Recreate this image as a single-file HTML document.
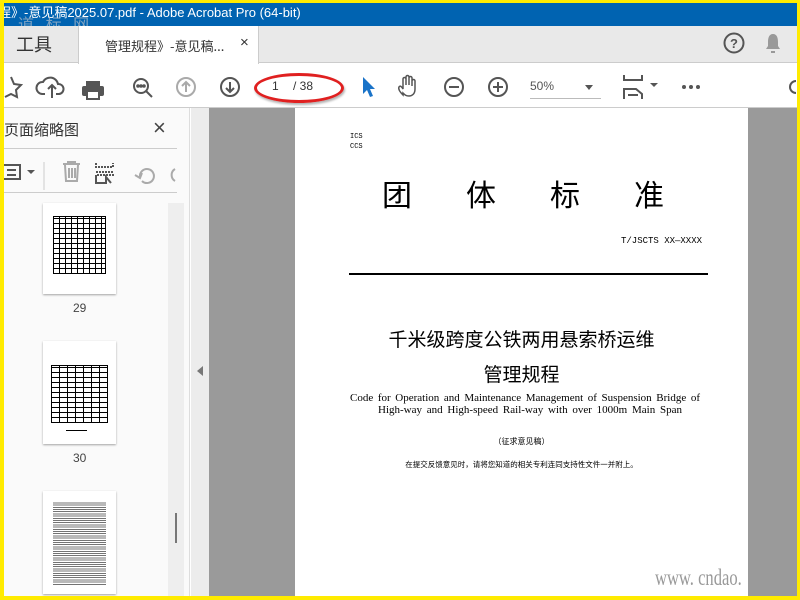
<!DOCTYPE html>
<html><head><meta charset="utf-8"><style>
*{margin:0;padding:0;box-sizing:border-box}
body{width:800px;height:600px;overflow:hidden;background:#ffeb00;position:relative;font-family:"Liberation Sans","Noto Sans CJK SC",sans-serif}
.a{position:absolute}
.cjk{font-family:"Noto Sans CJK SC",sans-serif}
</style></head><body>
<div class="a" style="left:4px;top:3px;width:793px;height:593px;background:#fff;overflow:hidden">
 <!-- title bar -->
 <div class="a" style="top:0;width:799px;height:23px;background:#0063b1;color:#fff;font-size:13px;line-height:19px;white-space:nowrap;left:-6px">程》-意见稿2025.07.pdf - Adobe Acrobat Pro (64-bit)</div>
 <div class="a cjk" style="left:14px;top:12px;color:rgba(180,190,200,.7);font-size:16px;letter-spacing:4px;line-height:16px">道 标 网</div>
 <!-- tab bar -->
 <div class="a" style="left:0;top:23px;width:793px;height:37px;background:#e9e9e9;border-bottom:1px solid #ccc"></div>
 <div class="a cjk" style="left:12px;top:28px;font-size:18px;color:#333">工具</div>
 <div class="a" style="left:74px;top:23px;width:181px;height:38px;background:#fff;border-left:1px solid #ccc;border-right:1px solid #ccc"></div>
 <div class="a cjk" style="left:101px;top:33px;font-size:13px;color:#333;white-space:nowrap">管理规程》-意见稿...</div>
 <div class="a" style="left:236px;top:31px;font-size:15px;color:#333">×</div>
 <svg class="a" style="left:719px;top:29px" width="22" height="22"><circle cx="11" cy="11" r="9.5" fill="none" stroke="#555" stroke-width="2"/><text x="11" y="16" font-size="13" font-weight="bold" text-anchor="middle" fill="#555" font-family="Liberation Sans">?</text></svg>
 <svg class="a" style="left:760px;top:29px" width="18" height="22"><path d="M9 2c4 0 5 4 5 8v4l2 3H2l2-3v-4c0-4 1-8 5-8zM7 19h4v2H7z" fill="#999"/></svg>
 <!-- toolbar -->
 <div class="a" style="left:0;top:104px;width:793px;height:1px;background:#ccc"></div>
 <svg class="a" style="left:0;top:62px" width="700" height="42" fill="none" stroke="#555" stroke-width="2">
  <path d="M7 12l3 7 7 1-5 5 1 7-6-3-6 3" />
  <path d="M41 29h-3a6 6 0 0 1 1-12 8 8 0 0 1 15 2 5 5 0 0 1 1 10h-3M48 33V20M44 24l4-4 4 4"/>
  <rect x="82" y="16" width="14" height="5" fill="#555" stroke="none"/><rect x="78" y="21" width="22" height="10" rx="2" fill="#555" stroke="none"/><rect x="83" y="26" width="12" height="8" fill="#fff" stroke="#555"/>
  <circle cx="137" cy="21" r="7"/><path d="M142 26l6 6"/><circle cx="134" cy="21" r=".8" fill="#555"/><circle cx="137" cy="21" r=".8" fill="#555"/><circle cx="140" cy="21" r=".8" fill="#555"/>
  <circle cx="182" cy="22" r="9" stroke="#aaa"/><path d="M182 27v-10M178 21l4-4 4 4" stroke="#aaa"/>
  <circle cx="226" cy="22" r="9"/><path d="M226 17v10M222 23l4 4 4-4"/>
  <path d="M359 12v17l4-4 3 7 3-1-3-7h5z" fill="#1a73c8" stroke="none"/>
  <path d="M399 30c-3-3-5-6-4-8s3 0 4 2V14a1.5 1.5 0 0 1 3 0v6-8a1.5 1.5 0 0 1 3 0v8-7a1.5 1.5 0 0 1 3 0v8-5a1.5 1.5 0 0 1 3 0v8c0 5-3 7-6 7s-4-1-6-3z" stroke-width="1.5"/>
  <circle cx="450" cy="22" r="9"/><path d="M445 22h10"/>
  <circle cx="494" cy="22" r="9"/><path d="M489 22h10M494 17v10"/>
  <path d="M620 10v5h18v-5M620 34v-10h12l6 5v5M624 30h10" stroke-width="2"/>
  <circle cx="680" cy="22" r="2" fill="#555" stroke="none"/><circle cx="687" cy="22" r="2" fill="#555" stroke="none"/><circle cx="694" cy="22" r="2" fill="#555" stroke="none"/>
 </svg>
 <div class="a" style="left:646px;top:80px;border-left:4px solid transparent;border-right:4px solid transparent;border-top:4px solid #555"></div>
 <svg class="a" style="left:783px;top:74px" width="12" height="20"><path d="M9 4a6 6 0 0 0 0 12" fill="none" stroke="#555" stroke-width="2"/></svg>
 <div class="a" style="left:250px;top:70px;width:90px;height:30px;border:3px solid #e02020;border-radius:50%;box-shadow:1px 2px 2px rgba(0,0,0,.3)"></div>
 <div class="a" style="left:268px;top:76px;font-size:12px;color:#333">1</div>
 <div class="a" style="left:289px;top:76px;font-size:12px;color:#333">/ 38</div>
 <div class="a" style="left:526px;top:76px;font-size:12px;color:#555">50%</div>
 <div class="a" style="left:581px;top:82px;border-left:4px solid transparent;border-right:4px solid transparent;border-top:5px solid #555"></div>
 <div class="a" style="left:526px;top:95px;width:71px;height:1px;background:#bbb"></div>
 <!-- sidebar -->
 <div class="a" style="left:0;top:105px;width:186px;height:490px;background:#fafafa;border-right:1px solid #ddd"></div>
 <div class="a cjk" style="left:0;top:116px;font-size:15px;color:#333">页面缩略图</div>
 <div class="a" style="left:149px;top:112px;font-size:22px;color:#444">×</div>
 <div class="a" style="left:0;top:145px;width:173px;height:1px;background:#ccc"></div>
 <div class="a" style="left:0;top:189px;width:173px;height:1px;background:#ccc"></div>
 <svg class="a" style="left:0;top:150px" width="186" height="38" fill="none" stroke="#555" stroke-width="2">
  <rect x="-2" y="12" width="18" height="14"/><path d="M3 17h9M3 22h9"/>
  <path d="M23 17l4 4 4-4z" fill="#555" stroke="none"/>
  <path d="M40 9v28" stroke="#ccc" stroke-width="1"/>
  <path d="M59 11h17M64 11v-2h7v2M61 12l1 16h11l1-16M65 15v10M68 15v10M71 15v10" stroke="#aaa"/>
  <path d="M92 10v4h17v-4M92 24v-2h17v2M92 19h17" stroke-dasharray="2 1"/><path d="M92 24v6h10v-6l5 6" />
  <path d="M136 24a7 7 0 1 1 2 4M131 22l5 3 2-5" stroke="#aaa"/>
  <path d="M171 16a7 7 0 0 0 0 12" stroke="#aaa"/>
 </svg>
 <div class="a" style="left:164px;top:200px;width:16px;height:395px;background:#eee"></div>
 <div class="a" style="left:171px;top:510px;width:2px;height:30px;background:#777"></div>
 <!-- thumbnails -->
 <div class="a" style="left:39px;top:200px;width:73px;height:91px;background:#fff;box-shadow:0 1px 2px rgba(0,0,0,.35)">
  <div class="a" style="left:10px;top:13px;width:53px;height:58px;border:1.5px solid #000;background:repeating-linear-gradient(90deg,transparent 0 5px,#000 5px 6px),repeating-linear-gradient(0deg,transparent 0 4px,#000 4px 5px)"></div>
 </div>
 <div class="a" style="left:69px;top:298px;font-size:12px;color:#444">29</div>
 <div class="a" style="left:39px;top:338px;width:73px;height:103px;background:#fff;box-shadow:0 1px 2px rgba(0,0,0,.35)">
  <div class="a" style="left:8px;top:24px;width:57px;height:58px;border:1.5px solid #000;background:repeating-linear-gradient(90deg,transparent 0 7px,#000 7px 8px),repeating-linear-gradient(0deg,transparent 0 4px,#000 4px 5px)"></div>
  <div class="a" style="left:23px;top:89px;width:21px;height:1px;background:#000"></div>
 </div>
 <div class="a" style="left:69px;top:448px;font-size:12px;color:#444">30</div>
 <div class="a" style="left:39px;top:488px;width:73px;height:103px;background:#fff;box-shadow:0 1px 2px rgba(0,0,0,.35)">
  <div class="a" style="left:10px;top:10px;width:53px;height:85px;background:repeating-linear-gradient(0deg,#fff 0 1.2px,#444 1.2px 2.2px);opacity:.75"></div>
 </div>
 <!-- doc area -->
 <div class="a" style="left:187px;top:105px;width:18px;height:490px;background:#ececec"></div>
 <div class="a" style="left:193px;top:363px;border-top:5px solid transparent;border-bottom:5px solid transparent;border-right:6px solid #777"></div>
 <div class="a" style="left:205px;top:105px;width:588px;height:490px;background:#9a9a9a"></div>
 <div class="a" style="left:291px;top:105px;width:453px;height:490px;background:#fff"></div>
 <div class="a" style="left:346px;top:129px;font-size:7px;line-height:10px;color:#000;font-family:'Liberation Mono',monospace">ICS<br>CCS</div>
 <div class="a cjk" style="left:378px;top:170px;font-size:30px;line-height:40px;color:#000;white-space:nowrap;letter-spacing:54px">团体标准</div>
 <div class="a" style="left:617px;top:233px;font-size:9px;color:#000;font-family:'Liberation Mono',monospace;white-space:nowrap">T/JSCTS XX—XXXX</div>
 <div class="a" style="left:345px;top:270px;width:359px;height:2px;background:#000"></div>
 <div class="a cjk" style="left:291px;top:322px;width:453px;text-align:center;font-size:19px;line-height:28px;color:#000">千米级跨度公铁两用悬索桥运维</div>
 <div class="a cjk" style="left:291px;top:357px;width:453px;text-align:center;font-size:19px;line-height:28px;color:#000">管理规程</div>
 <div class="a" style="left:346px;top:389px;width:350px;text-align:justify;text-align-last:justify;font-family:'Liberation Serif',serif;font-size:11px;line-height:12px;color:#000">Code for Operation and Maintenance Management of Suspension Bridge of</div>
 <div class="a" style="left:374px;top:401px;width:304px;text-align:justify;text-align-last:justify;font-family:'Liberation Serif',serif;font-size:11px;line-height:12px;color:#000">High-way and High-speed Rail-way with over 1000m Main Span</div>
 <div class="a cjk" style="left:291px;top:433px;width:453px;text-align:center;font-size:8px;color:#000">（征求意见稿）</div>
 <div class="a cjk" style="left:291px;top:456px;width:453px;text-align:center;font-size:7.5px;color:#000;white-space:nowrap">在提交反馈意见时，请将您知道的相关专利连同支持性文件一并附上。</div>
 <div class="a" style="left:651px;top:562px;font-family:'Liberation Serif',serif;font-size:23px;color:#999;white-space:nowrap;transform:scaleX(0.72);transform-origin:left top">www. cndao.</div>
</div>
</body></html>
